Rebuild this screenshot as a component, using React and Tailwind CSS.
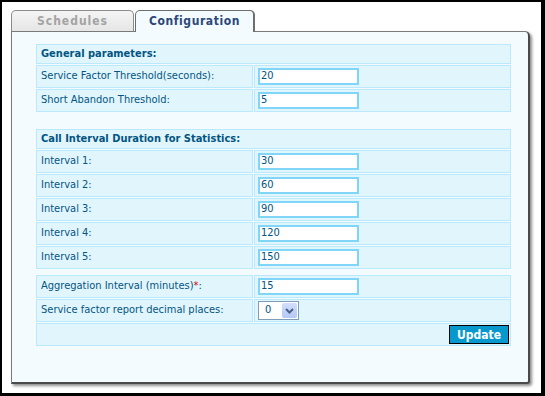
import React from "react";

const font = "font-['DejaVu_Sans_Condensed','DejaVu_Sans',sans-serif]";

function Header({ children }) {
  return (
    <div className="h-[20px] border border-[#b9e9fa] bg-[#e1f5fd] pl-[4px] flex items-center text-[11px] font-bold text-[#035582]">
      {children}
    </div>
  );
}

function Row({ label, children }) {
  return (
    <div className="flex gap-[1px] h-[23px]">
      <div className="w-[217px] border border-[#b9e9fa] bg-[#e1f5fd] pl-[4px] flex items-center text-[11px] text-[#035582]">
        {label}
      </div>
      <div className="flex-1 border border-[#b9e9fa] bg-[#e1f5fd] pl-[3px] flex items-center">
        {children}
      </div>
    </div>
  );
}

function Field({ value }) {
  return (
    <div className="w-[101px] h-[17px] border-2 border-[#80d6f8] bg-white pl-[1px] flex items-center text-[11px] text-[#035582]">
      {value}
    </div>
  );
}

export default function App() {
  const intervals = [
    ["Interval 1:", "30"],
    ["Interval 2:", "60"],
    ["Interval 3:", "90"],
    ["Interval 4:", "120"],
    ["Interval 5:", "150"],
  ];

  return (
    <div className={`w-[545px] h-[396px] bg-black pt-[2px] pl-[2px] pr-[4px] pb-[3px] ${font}`}>
      <div className="h-full bg-white pl-[9px] pt-[8px]">
        {/* Tabs */}
        <div className="flex items-end h-[21px] relative z-10">
          <div className="w-[123px] h-[21px] rounded-t-[5px] border border-b-0 border-[#8c8c8c] bg-gradient-to-b from-[#f4f4f4] to-[#e6e6e6] flex items-center justify-center text-[12px] font-bold tracking-[1px] text-[#a3a3a3]">
            Schedules
          </div>
          <div className="ml-[1px] w-[120px] h-[22px] -mb-[1px] rounded-t-[5px] border border-b-0 border-r-2 border-[#6e6e6e] bg-[#f3fbff] flex items-center justify-center pb-[1px] text-[12px] font-bold tracking-[0.6px] text-[#2c477a]">
            Configuration
          </div>
        </div>

        {/* Panel */}
        <div className="w-[519px] h-[353px] border border-[#7a7a7a] border-r-2 border-b-2 border-r-[#4a4a4a] border-b-[#4a4a4a] rounded-br-[3px] rounded-tr-[5px] bg-[#f3fbff] shadow-[2px_2px_3px_rgba(0,0,0,0.45)] pl-[24px] pt-[12px]">
          <div className="w-[475px] flex flex-col gap-[1px]">
            <Header>General parameters:</Header>
            <Row label="Service Factor Threshold(seconds):">
              <Field value="20" />
            </Row>
            <Row label="Short Abandon Threshold:">
              <Field value="5" />
            </Row>

            <div className="h-[15px]" />

            <Header>Call Interval Duration for Statistics:</Header>
            {intervals.map(([label, value]) => (
              <Row key={label} label={label}>
                <Field value={value} />
              </Row>
            ))}

            <div className="h-[4px]" />

            <Row
              label={
                <span>
                  Aggregation Interval (minutes)<span className="text-[#d40000]">*</span>:
                </span>
              }
            >
              <Field value="15" />
            </Row>
            <Row label="Service factor report decimal places:">
              <div className="w-[41px] h-[19px] border border-[#7f9db9] bg-white flex items-center justify-between pl-[6px] pr-[1px] text-[11px] text-[#035582]">
                0
                <span className="w-[15px] h-[15px] rounded-[2px] bg-gradient-to-b from-[#d2defc] to-[#b4c8f6] flex items-center justify-center">
                  <svg width="9" height="6" viewBox="0 0 9 6">
                    <path d="M1 1 L4.5 4.5 L8 1" fill="none" stroke="#4d6185" strokeWidth="2" />
                  </svg>
                </span>
              </div>
            </Row>
            <div className="h-[23px] border border-[#b9e9fa] bg-[#e1f5fd] flex items-center justify-end pr-[1px]">
              <button className="w-[60px] h-[19px] border border-black bg-[#0798cd] text-white text-[12px] font-bold leading-none">
                Update
              </button>
            </div>
          </div>
        </div>
      </div>
    </div>
  );
}
